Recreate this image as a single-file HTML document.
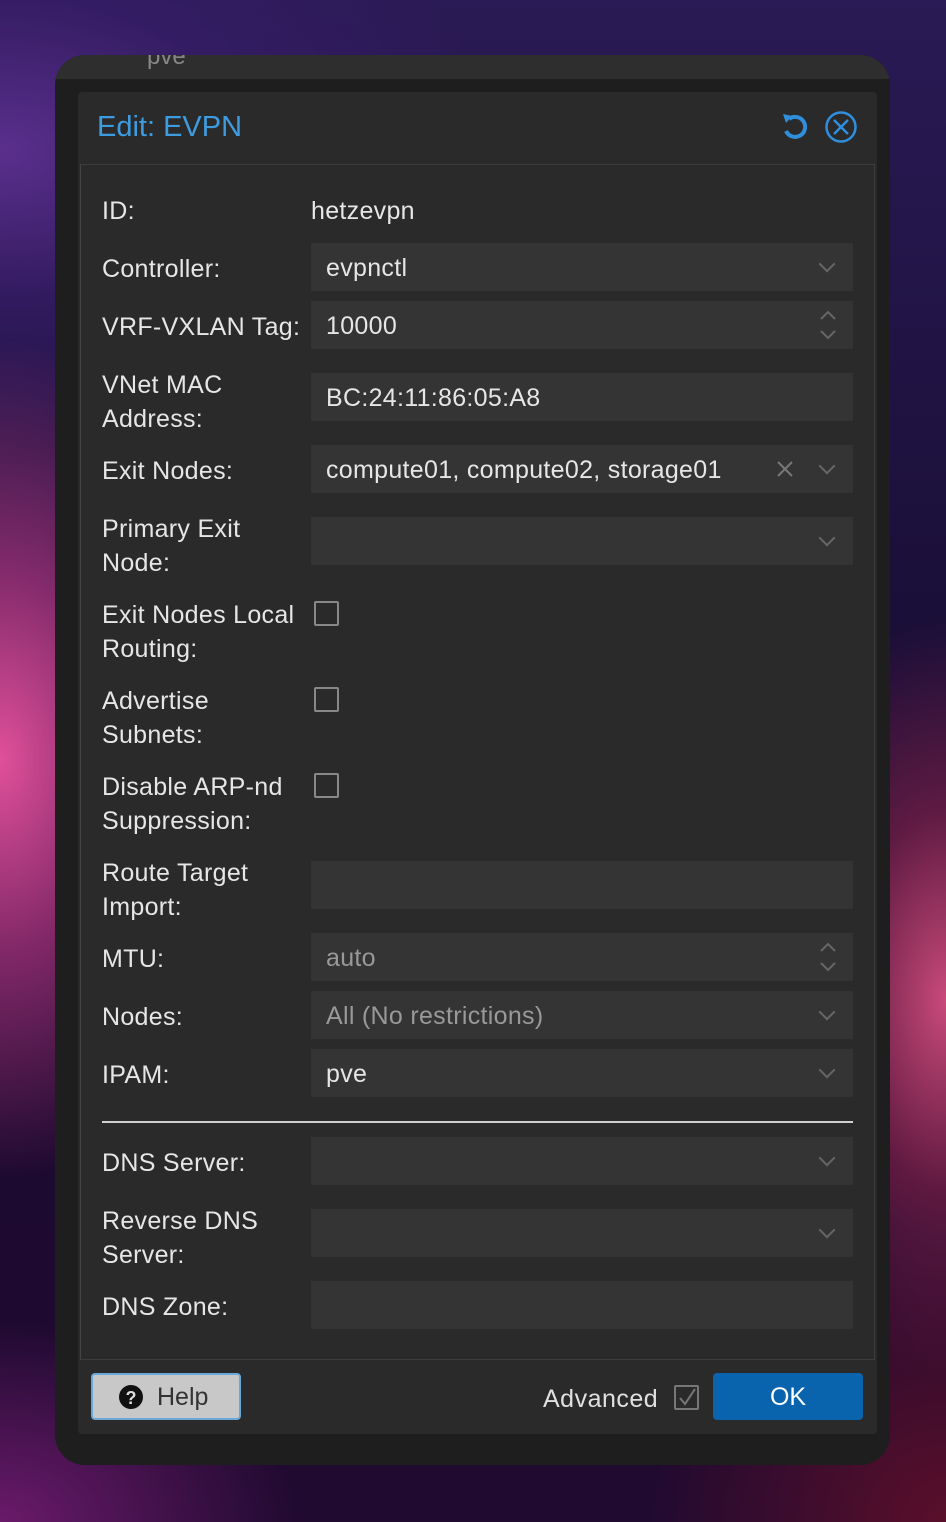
<!DOCTYPE html>
<html><head><style>
*{margin:0;padding:0;box-sizing:border-box}
body{width:946px;height:1522px;overflow:hidden;position:relative;font-family:"Liberation Sans",sans-serif;
background:
radial-gradient(ellipse 260px 420px at 0px 760px,#e0509a 0%,rgba(200,60,140,.6) 45%,rgba(0,0,0,0) 100%),
radial-gradient(ellipse 200px 380px at 946px 1000px,#c94a7a 0%,rgba(160,40,80,.5) 50%,rgba(0,0,0,0) 100%),
radial-gradient(ellipse 500px 300px at 0px 150px,#5a2f8c 0%,rgba(60,30,110,.6) 50%,rgba(0,0,0,0) 100%),
radial-gradient(ellipse 300px 200px at 0px 1522px,#6a1a6a 0%,rgba(0,0,0,0) 100%),
radial-gradient(ellipse 300px 300px at 946px 1522px,#5a0f2a 0%,rgba(0,0,0,0) 100%),
linear-gradient(180deg,#2a1a55 0%,#1a0f38 40%,#1c0a30 70%,#200a30 100%);}
.win{position:absolute;left:55px;top:55px;width:835px;height:1410px;border-radius:30px;background:#1e1e1e;overflow:hidden}
.win .tb{position:absolute;left:0;top:0;width:100%;height:24px;background:#2e2e2e}
.pve{position:absolute;left:92px;top:-12px;color:#888;font-size:24px}
.dlg{position:absolute;left:78px;top:92px;width:799px;height:1342px;background:#2a2a2a;border-radius:4px}
.title{position:absolute;left:97px;top:111px;color:#3d9be0;font-size:29px}
.body{position:absolute;left:80px;top:164px;width:795px;height:1196px;border:1px solid #3c3c3c;border-left-color:#444;background:#2a2a2a}
.l,.i,.v{letter-spacing:0.3px}
.l{position:absolute;left:102px;color:#e6e6e6;font-size:25px;line-height:34px;top:1px}
.i{position:absolute;left:311px;width:542px;height:48px;background:#343434;color:#e6e6e6;font-size:25px;line-height:50px;padding-left:15px}
.i.g{color:#999}
.dd::after{content:"";position:absolute;right:20px;top:15px;width:10px;height:10px;border-right:2px solid #666;border-bottom:2px solid #666;transform:rotate(45deg)}
.sp{position:absolute;right:16px;top:8px;width:18px;height:32px}
.cb{position:absolute;left:314px;width:25px;height:25px;border:2px solid #888;border-radius:2px}
.v{position:absolute;left:311px;color:#e6e6e6;font-size:25px;line-height:34px}
</style></head><body>
<div class="win"><div class="tb"></div><div class="pve">pve</div></div>
<div class="dlg"></div>
<div class="title">Edit: EVPN</div>
<svg style="position:absolute;left:780px;top:110px" width="80" height="34" viewBox="0 0 80 34">
<path d="M9 9 A10 10 0 1 1 6 21" fill="none" stroke="#2f8fdd" stroke-width="4"/>
<path d="M3 4 L12 6 L6 13 Z" fill="#2f8fdd"/>
<circle cx="61" cy="17" r="14.5" fill="none" stroke="#2f8fdd" stroke-width="2.5"/>
<path d="M54 10 L68 24 M68 10 L54 24" stroke="#2f8fdd" stroke-width="2.5"/>
</svg>
<div class="body"></div>
<div class="l" style="top:194px">ID:</div><div class="v" style="top:194px">hetzevpn</div>
<div class="l" style="top:252px">Controller:</div><div class="i dd" style="top:243px">evpnctl</div>
<div class="l" style="top:310px">VRF-VXLAN Tag:</div><div class="i" style="top:301px">10000<svg class="sp" viewBox="0 0 18 32"><path d="M2 10 L9 3 L16 10 M2 22 L9 29 L16 22" fill="none" stroke="#666" stroke-width="2"/></svg></div>
<div class="l" style="top:368px">VNet MAC<br>Address:</div><div class="i" style="top:373px">BC:24:11:86:05:A8</div>
<div class="l" style="top:454px">Exit Nodes:</div><div class="i dd" style="top:445px">compute01, compute02, storage01<svg style="position:absolute;right:60px;top:16px" width="16" height="16"><path d="M1 1 L15 15 M15 1 L1 15" stroke="#777" stroke-width="2"/></svg></div>
<div class="l" style="top:512px">Primary Exit<br>Node:</div><div class="i dd" style="top:517px"></div>
<div class="l" style="top:598px">Exit Nodes Local<br>Routing:</div><div class="cb" style="top:601px"></div>
<div class="l" style="top:684px">Advertise<br>Subnets:</div><div class="cb" style="top:687px"></div>
<div class="l" style="top:770px">Disable ARP-nd<br>Suppression:</div><div class="cb" style="top:773px"></div>
<div class="l" style="top:856px">Route Target<br>Import:</div><div class="i" style="top:861px"></div>
<div class="l" style="top:942px">MTU:</div><div class="i g" style="top:933px">auto<svg class="sp" viewBox="0 0 18 32"><path d="M2 10 L9 3 L16 10 M2 22 L9 29 L16 22" fill="none" stroke="#666" stroke-width="2"/></svg></div>
<div class="l" style="top:1000px">Nodes:</div><div class="i g dd" style="top:991px">All (No restrictions)</div>
<div class="l" style="top:1058px">IPAM:</div><div class="i dd" style="top:1049px">pve</div>
<div style="position:absolute;left:102px;top:1121px;width:751px;height:2px;background:#d0d0d0"></div>
<div class="l" style="top:1146px">DNS Server:</div><div class="i dd" style="top:1137px"></div>
<div class="l" style="top:1204px">Reverse DNS<br>Server:</div><div class="i dd" style="top:1209px"></div>
<div class="l" style="top:1290px">DNS Zone:</div><div class="i" style="top:1281px"></div>
<div style="position:absolute;left:91px;top:1373px;width:150px;height:47px;background:#c8c8c8;border:2px solid #6aa8d8;border-radius:4px;font-size:25px;color:#333;line-height:45px;padding-left:64px">Help
<svg style="position:absolute;left:26px;top:10px" width="24" height="24"><circle cx="12" cy="12" r="12" fill="#111"/><text x="12" y="19" text-anchor="middle" fill="#ddd" font-size="18" font-weight="bold" font-family="Liberation Sans">?</text></svg></div>
<div style="position:absolute;left:543px;top:1382px;font-size:25px;color:#e0e0e0;line-height:34px;letter-spacing:0.5px">Advanced</div>
<div style="position:absolute;left:674px;top:1385px;width:25px;height:25px;border:2px solid #777;border-radius:2px"><svg width="21" height="21"><path d="M4 11 L9 17 L19 2" fill="none" stroke="#777" stroke-width="2"/></svg></div>
<div style="position:absolute;left:713px;top:1373px;width:150px;height:47px;background:#0a63ad;border-radius:4px;color:#fff;font-size:25px;text-align:center;line-height:48px">OK</div>
</body></html>
